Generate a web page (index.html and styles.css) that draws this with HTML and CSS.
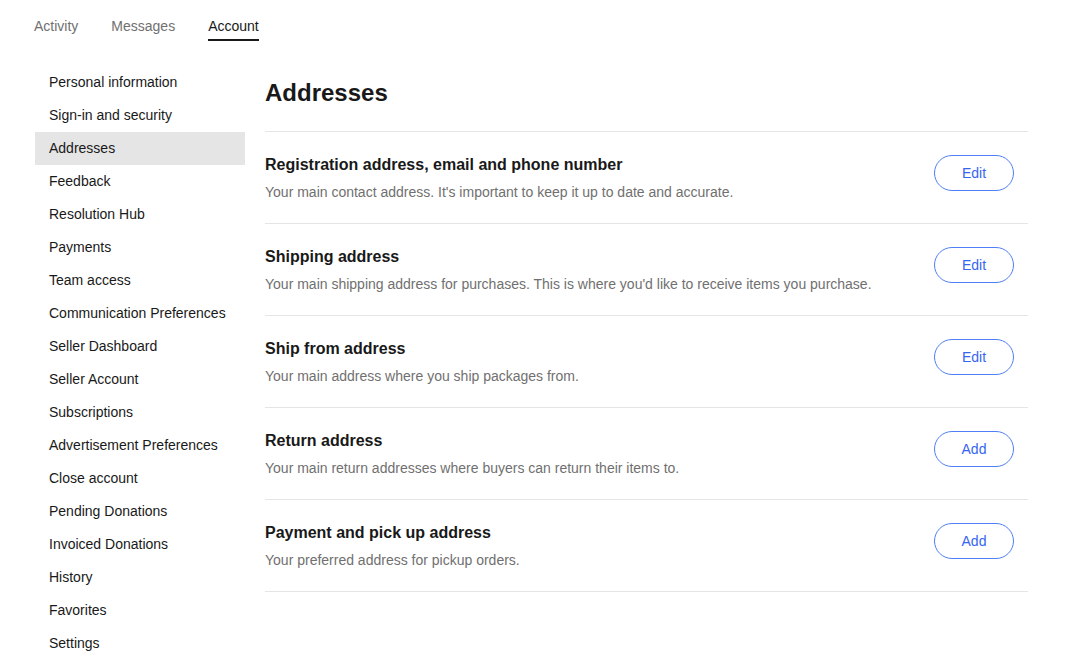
FILE: index.html
```html
<!DOCTYPE html>
<html>
<head>
    <title>Addresses</title>
    <meta charset="UTF-8">
    <link rel="stylesheet" href="styles.css">
</head>
<body>
    <!-- Top tabs -->
    <nav class="tabs">
        <a class="tab">Activity</a>
        <a class="tab">Messages</a>
        <a class="tab active">Account</a>
    </nav>

    <div class="layout">
        <!-- Sidebar -->
        <ul class="side-nav">
            <li>Personal information</li>
            <li>Sign-in and security</li>
            <li class="selected">Addresses</li>
            <li>Feedback</li>
            <li>Resolution Hub</li>
            <li>Payments</li>
            <li>Team access</li>
            <li>Communication Preferences</li>
            <li>Seller Dashboard</li>
            <li>Seller Account</li>
            <li>Subscriptions</li>
            <li>Advertisement Preferences</li>
            <li>Close account</li>
            <li>Pending Donations</li>
            <li>Invoiced Donations</li>
            <li>History</li>
            <li>Favorites</li>
            <li>Settings</li>
        </ul>

        <!-- Main content -->
        <main class="content">
            <h1>Addresses</h1>
            <div class="address-list">
                <div class="address-row">
                    <div class="address-text">
                        <h2>Registration address, email and phone number</h2>
                        <p>Your main contact address. It's important to keep it up to date and accurate.</p>
                    </div>
                    <button class="pill-btn">Edit</button>
                </div>
                <div class="address-row">
                    <div class="address-text">
                        <h2>Shipping address</h2>
                        <p>Your main shipping address for purchases. This is where you'd like to receive items you purchase.</p>
                    </div>
                    <button class="pill-btn">Edit</button>
                </div>
                <div class="address-row">
                    <div class="address-text">
                        <h2>Ship from address</h2>
                        <p>Your main address where you ship packages from.</p>
                    </div>
                    <button class="pill-btn">Edit</button>
                </div>
                <div class="address-row">
                    <div class="address-text">
                        <h2>Return address</h2>
                        <p>Your main return addresses where buyers can return their items to.</p>
                    </div>
                    <button class="pill-btn">Add</button>
                </div>
                <div class="address-row">
                    <div class="address-text">
                        <h2>Payment and pick up address</h2>
                        <p>Your preferred address for pickup orders.</p>
                    </div>
                    <button class="pill-btn">Add</button>
                </div>
            </div>
        </main>
    </div>
</body>
</html>
```

FILE: styles.css
```css
body {
    margin: 0;
    padding: 0;
    font-family: 'Liberation Sans', Arial, sans-serif;
    color: #191919;
    background-color: #fff;
    font-size: 14px;
}

/* --- Top tabs --- */
.tabs {
    display: flex;
    padding: 17px 0 0 34px;
    height: 24px;
}
.tab {
    color: #707070;
    font-size: 14px;
    margin-right: 33px;
    line-height: 18px;
    height: 24px;
    box-sizing: border-box;
}
.tab.active {
    color: #191919;
    border-bottom: 2px solid #191919;
}

/* --- Layout --- */
.layout {
    display: flex;
    padding: 25px 52px 0 35px;
}

/* --- Sidebar --- */
.side-nav {
    list-style: none;
    margin: 0;
    padding: 0;
    width: 210px;
    flex-shrink: 0;
}
.side-nav li {
    height: 33px;
    line-height: 33px;
    padding-left: 14px;
    font-size: 14px;
    color: #191919;
}
.side-nav li.selected {
    background-color: #e5e5e5;
}

/* --- Main content --- */
.content {
    flex-grow: 1;
    margin-left: 20px;
}
h1 {
    margin: 0;
    font-size: 24px;
    font-weight: 700;
    line-height: 32px;
    padding: 11px 0 22px;
}
.address-list {
    border-top: 1px solid #e5e5e5;
}
.address-row {
    display: flex;
    align-items: center;
    justify-content: space-between;
    height: 91px;
    border-bottom: 1px solid #e5e5e5;
    padding: 0 14px 0 0;
}
.address-text h2 {
    margin: 0 0 6px;
    font-size: 16px;
    font-weight: 700;
    line-height: 22px;
}
.address-text p {
    margin: 0;
    font-size: 14px;
    color: #707070;
    line-height: 20px;
}
.pill-btn {
    width: 80px;
    height: 36px;
    border-radius: 18px;
    border: 1px solid #4f7ef5;
    background-color: #fff;
    color: #3665f3;
    font-family: inherit;
    font-size: 14px;
    cursor: pointer;
    margin-top: -10px;
}
```
